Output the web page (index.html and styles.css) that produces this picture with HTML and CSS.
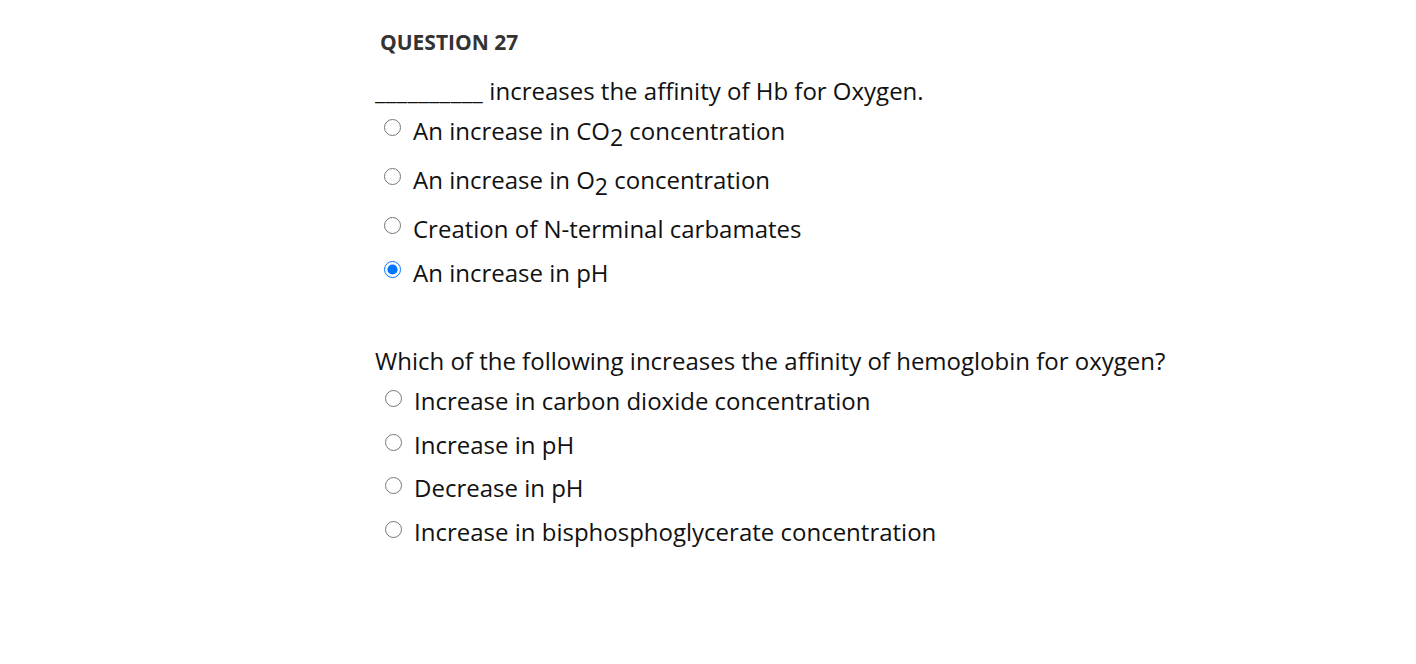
FILE: index.html
```html
<!DOCTYPE html>
<html>
<head>
<meta charset="utf-8">
<link rel="stylesheet" href="styles.css">
</head>
<body>
<div class="page">
  <h2 class="qtitle">QUESTION 27</h2>
  <div class="block">
    <p class="qtext"><span class="blank">__________</span> increases the affinity of Hb for Oxygen.</p>
    <ul class="opts">
      <li class="opt sub-a"><input type="radio" name="q1"><span>An increase in CO<sub>2</sub> concentration</span></li>
      <li class="opt sub-b"><input type="radio" name="q1"><span>An increase in O<sub>2</sub> concentration</span></li>
      <li class="opt"><input type="radio" name="q1"><span>Creation of N-terminal carbamates</span></li>
      <li class="opt"><input type="radio" name="q1" checked><span>An increase in pH</span></li>
    </ul>
  </div>
  <div class="block second">
    <p class="qtext">Which of the following increases the affinity of hemoglobin for oxygen?</p>
    <ul class="opts opts2">
      <li class="opt"><input type="radio" name="q2"><span>Increase in carbon dioxide concentration</span></li>
      <li class="opt"><input type="radio" name="q2"><span>Increase in pH</span></li>
      <li class="opt tight"><input type="radio" name="q2"><span>Decrease in pH</span></li>
      <li class="opt"><input type="radio" name="q2"><span>Increase in bisphosphoglycerate concentration</span></li>
    </ul>
  </div>
</div>
</body>
</html>
```
FILE: styles.css
```css
html, body {
  margin: 0;
  padding: 0;
  background: #ffffff;
}
body {
  font-family: "Open Sans", "Liberation Sans", sans-serif;
  color: #111111;
}
.page {
  padding: 28px 0 0 375px;
}
.qtitle {
  margin: 0 0 0 5px;
  font-size: 21px;
  line-height: 28px;
  font-weight: 700;
  color: #333333;
}
.block {
  margin-top: 19px;
}
.block.second {
  margin-top: 50px;
}
.qtext {
  margin: 0;
  font-size: 24px;
  line-height: 32px;
}
.blank {
  letter-spacing: 0.3px;
}
.opts {
  list-style: none;
  margin: 0;
  padding: 0 0 0 9px;
}
.opt {
  display: flex;
  align-items: flex-start;
  font-size: 24px;
  line-height: 32px;
  padding: 6px 0;
}
.opt:first-child {
  padding-top: 8px;
}
.opt input {
  width: 17px;
  height: 17px;
  margin: 4px 12px 0 0;
  flex: none;
}
.opts2 .opt input {
  margin-top: 5px;
  margin-left: 1px;
}
.sub-a {
  padding-bottom: 11px;
}
.sub-b {
  padding-bottom: 11px;
}
.tight {
  padding-top: 5px;
}
sub {
  font-size: 23px;
  line-height: 0;
  vertical-align: -6px;
}
```
